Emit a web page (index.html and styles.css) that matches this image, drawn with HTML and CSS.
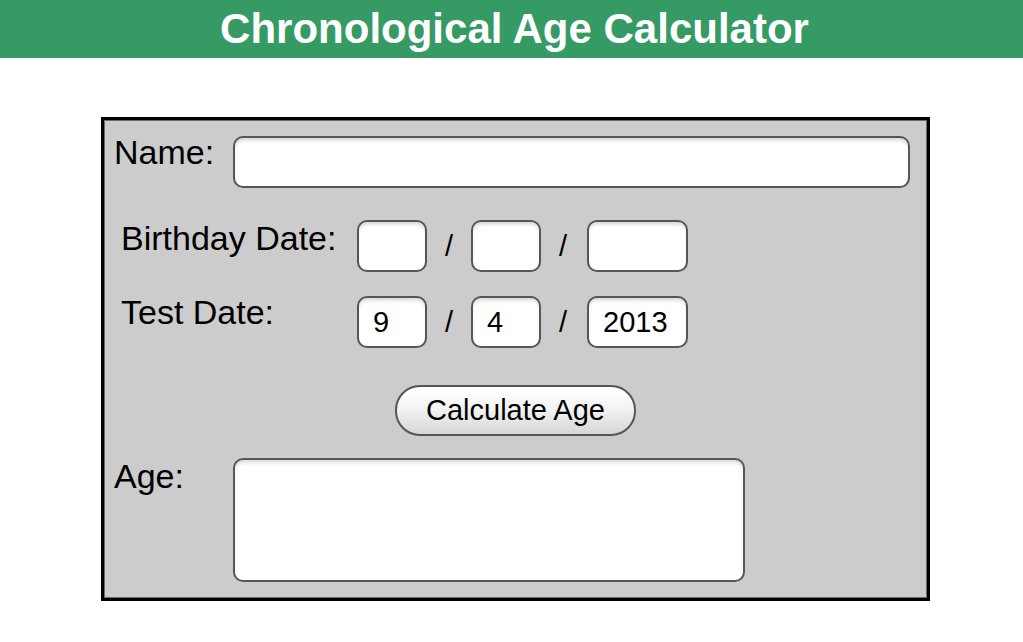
FILE: index.html
```html
<!DOCTYPE html>
<html>
<head>
<meta charset="utf-8">
<title>Chronological Age Calculator</title>
<link rel="stylesheet" href="styles.css">
</head>
<body>
<header class="header">
  <h1 class="title">Chronological Age Calculator</h1>
</header>
<main class="panel">
  <div class="row name-row">
    <label class="label name-label">Name:</label>
    <input class="field name-field" type="text">
  </div>
  <div class="row date-row birth-row">
    <label class="label date-label">Birthday Date:</label>
    <input class="field small" type="text">
    <span class="slash">/</span>
    <input class="field small" type="text">
    <span class="slash">/</span>
    <input class="field year" type="text">
  </div>
  <div class="row date-row test-row">
    <label class="label date-label">Test Date:</label>
    <input class="field small" type="text" value="9">
    <span class="slash">/</span>
    <input class="field small" type="text" value="4">
    <span class="slash">/</span>
    <input class="field year" type="text" value="2013">
  </div>
  <div class="row button-row">
    <button class="calc-btn" type="button">Calculate Age</button>
  </div>
  <div class="row age-row">
    <label class="label name-label">Age:</label>
    <textarea class="field age-field"></textarea>
  </div>
</main>
</body>
</html>
```

FILE: styles.css
```css
html, body {
  margin: 0;
  padding: 0;
  background: #ffffff;
}

body {
  font-family: "Liberation Sans", Arial, Helvetica, sans-serif;
  color: #000;
}

.header {
  background: #369a65;
  height: 58px;
}

.title {
  margin: 0;
  text-align: center;
  color: #ffffff;
  font-size: 42px;
  font-weight: bold;
  line-height: 58px;
  padding-left: 6px;
}

.panel {
  box-sizing: border-box;
  width: 829px;
  margin: 59px 0 0 101px;
  background: #cccccc;
  border: 3px solid #000000;
  box-shadow: inset 0 0 0 1px #6a6a6a;
  padding: 16px 17px 16px 10px;
}

.row {
  display: flex;
  align-items: flex-start;
}

.label {
  font-size: 34px;
  line-height: 38px;
  white-space: nowrap;
}

.name-label {
  width: 119px;
  flex: none;
  margin-top: -3px;
}

.date-row {
  padding-left: 7px;
  align-items: center;
}

.date-label {
  width: 236px;
  flex: none;
  align-self: flex-start;
}

.birth-row {
  margin-top: 32px;
}

.birth-row .date-label {
  margin-top: -1px;
}

.test-row {
  margin-top: 24px;
}

.test-row .date-label {
  margin-top: -3px;
}

.field {
  box-sizing: border-box;
  height: 52px;
  border: 2px solid #565656;
  border-radius: 10px;
  background: #ffffff;
  box-shadow: inset 0 4px 4px -2px rgba(0, 0, 0, 0.18);
  font-family: "Liberation Sans", Arial, Helvetica, sans-serif;
  font-size: 29px;
  color: #000;
  padding: 0 0 0 14px;
  margin: 0;
  outline: none;
}

.name-field {
  flex: 1;
}

.small {
  width: 70px;
}

.year {
  width: 101px;
  margin-left: 2px;
}

.slash {
  width: 44px;
  text-align: center;
  font-size: 29px;
  line-height: 52px;
}

.button-row {
  justify-content: center;
  margin-top: 37px;
  padding-left: 7px;
}

.calc-btn {
  box-sizing: border-box;
  width: 241px;
  height: 51px;
  border: 2px solid #555555;
  border-radius: 25px;
  background: linear-gradient(to bottom, #ffffff 0%, #f4f4f4 45%, #d6d6d6 100%);
  font-family: "Liberation Sans", Arial, Helvetica, sans-serif;
  font-size: 29px;
  color: #000;
  padding: 0;
}

.age-row {
  margin-top: 22px;
}

.age-row .name-label {
  margin-top: -1px;
}

.age-field {
  width: 512px;
  height: 124px;
  resize: none;
  display: block;
}
```
